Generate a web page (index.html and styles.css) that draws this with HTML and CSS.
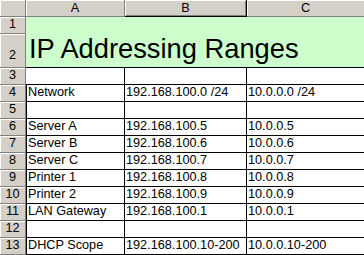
FILE: index.html
```html
<!DOCTYPE html>
<html>
<head>
<meta charset="utf-8">
<link rel="stylesheet" href="styles.css">
</head>
<body>
<div class="sheet">
  <div class="corner"></div>
  <div class="colhead">A</div>
  <div class="colhead active">B</div>
  <div class="colhead last">C</div>

  <div class="rowhead r1">1</div>
  <div class="title">IP Addressing Ranges</div>
  <div class="rowhead r2">2</div>

  <div class="rowhead">3</div>
  <div class="cell row3"></div>
  <div class="cell row3"></div>
  <div class="cell row3 c"></div>

  <div class="rowhead">4</div>
  <div class="cell a">Network</div>
  <div class="cell">192.168.100.0 /24</div>
  <div class="cell c">10.0.0.0 /24</div>

  <div class="rowhead">5</div>
  <div class="cell a"></div>
  <div class="cell"></div>
  <div class="cell c"></div>

  <div class="rowhead">6</div>
  <div class="cell a">Server A</div>
  <div class="cell">192.168.100.5</div>
  <div class="cell c">10.0.0.5</div>

  <div class="rowhead">7</div>
  <div class="cell a">Server B</div>
  <div class="cell">192.168.100.6</div>
  <div class="cell c">10.0.0.6</div>

  <div class="rowhead">8</div>
  <div class="cell a">Server C</div>
  <div class="cell">192.168.100.7</div>
  <div class="cell c">10.0.0.7</div>

  <div class="rowhead">9</div>
  <div class="cell a">Printer 1</div>
  <div class="cell">192.168.100.8</div>
  <div class="cell c">10.0.0.8</div>

  <div class="rowhead">10</div>
  <div class="cell a">Printer 2</div>
  <div class="cell">192.168.100.9</div>
  <div class="cell c">10.0.0.9</div>

  <div class="rowhead">11</div>
  <div class="cell a">LAN Gateway</div>
  <div class="cell">192.168.100.1</div>
  <div class="cell c">10.0.0.1</div>

  <div class="rowhead">12</div>
  <div class="cell a"></div>
  <div class="cell"></div>
  <div class="cell c"></div>

  <div class="rowhead">13</div>
  <div class="cell a">DHCP Scope</div>
  <div class="cell">192.168.100.10-200</div>
  <div class="cell c">10.0.0.10-200</div>
</div>
</body>
</html>
```

FILE: styles.css
```css
html, body {
  margin: 0;
  padding: 0;
  background: #ffffff;
}

.sheet {
  display: grid;
  grid-template-columns: 26px 99px 122px 117px;
  grid-template-rows: 17px 17px 34px repeat(11, 17px);
  width: 364px;
  height: 255px;
  overflow: hidden;
  font-family: "Liberation Sans", Arial, sans-serif;
  font-size: 12.7px;
  line-height: 15px;
  color: #000;
}

.sheet > div {
  box-sizing: border-box;
  display: flex;
  white-space: nowrap;
  overflow: hidden;
}

.corner,
.colhead,
.rowhead {
  background: #d4d0c8;
  justify-content: center;
  border-right: 1px solid #808080;
  border-bottom: 1px solid #808080;
  box-shadow: inset 1px 1px 0 #ffffff;
}

.colhead {
  align-items: center;
}

.colhead.active {
  border-right-color: #000000;
  border-bottom-color: #000000;
  box-shadow: inset 1px 1px 0 #ffffff, inset -1px -1px 0 #808080;
}

.colhead.last {
  border-right: none;
}

.rowhead {
  align-items: flex-end;
  padding-bottom: 1px;
}

.rowhead.r2 {
  padding-bottom: 4px;
}

.title {
  grid-column: 2 / 5;
  grid-row: 2 / 4;
  background: #ccffcc;
  border-bottom: 1px solid #000000;
  font-size: 27.3px;
  line-height: 30px;
  align-items: flex-end;
  padding-left: 3px;
  padding-bottom: 3px;
}

.cell {
  background: #ffffff;
  border-right: 1px solid #000000;
  border-bottom: 1px solid #000000;
  align-items: flex-end;
  padding-left: 1px;
  padding-bottom: 1px;
}

.cell.a {
  box-shadow: inset 1px 0 0 #000000;
  padding-left: 2px;
}

.cell.row3 {
  box-shadow: none;
}

.cell.c {
  border-right: none;
}
```
